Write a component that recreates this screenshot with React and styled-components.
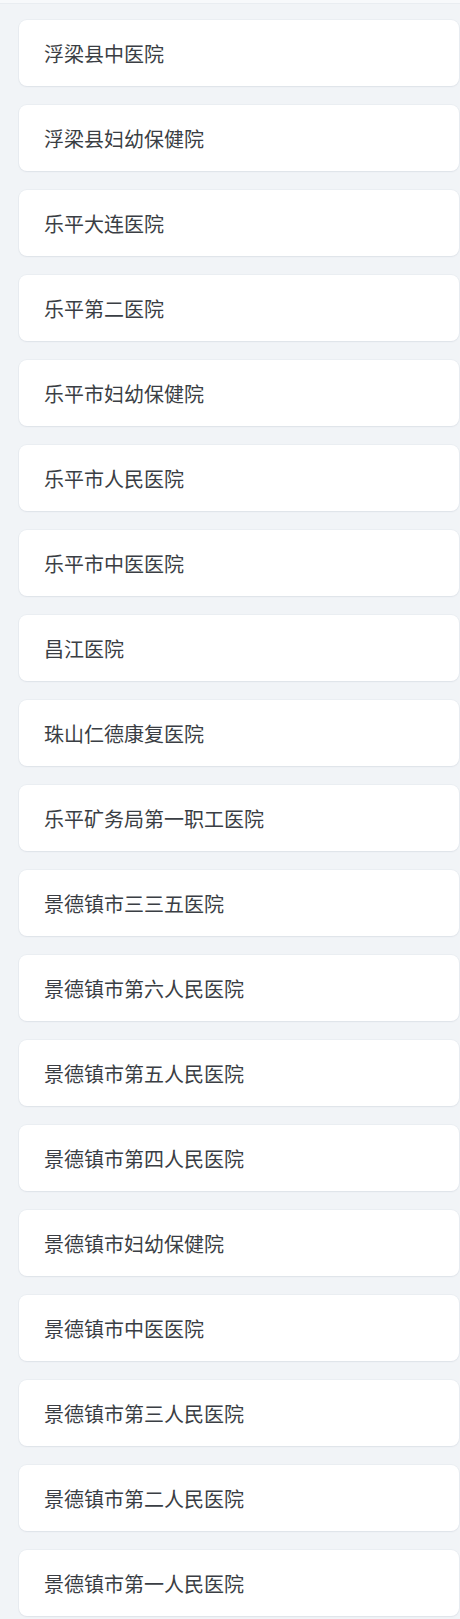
import React from "react";
import styled, { createGlobalStyle } from "styled-components";

const Global = createGlobalStyle`
  html, body { margin: 0; padding: 0; background: #f1f4f7; }
  body { font-family: "Microsoft YaHei", "Noto Sans CJK SC", "Noto Sans", sans-serif; }
`;

const TopStrip = styled.div`
  height: 3px;
  background: #f7f9fb;
  border-bottom: 1px solid #e9edf1;
`;

const List = styled.ul`
  list-style: none;
  margin: 0;
  padding: 16px 1px 3px 19px;
  display: flex;
  flex-direction: column;
  gap: 19px;
`;

const Card = styled.li`
  height: 66px;
  box-sizing: border-box;
  display: flex;
  align-items: center;
  padding-left: 25px;
  background: #ffffff;
  border-radius: 8px;
  box-shadow: 0 1px 2px rgba(30, 50, 80, 0.06), 0 0 0 1px rgba(30, 50, 80, 0.03);
  font-size: 20px;
  color: #3a3e44;
  font-weight: 400;
`;

const hospitals = [
  "浮梁县中医院",
  "浮梁县妇幼保健院",
  "乐平大连医院",
  "乐平第二医院",
  "乐平市妇幼保健院",
  "乐平市人民医院",
  "乐平市中医医院",
  "昌江医院",
  "珠山仁德康复医院",
  "乐平矿务局第一职工医院",
  "景德镇市三三五医院",
  "景德镇市第六人民医院",
  "景德镇市第五人民医院",
  "景德镇市第四人民医院",
  "景德镇市妇幼保健院",
  "景德镇市中医医院",
  "景德镇市第三人民医院",
  "景德镇市第二人民医院",
  "景德镇市第一人民医院",
];

export default function App() {
  return (
    <>
      <Global />
      <TopStrip />
      <List>
        {hospitals.map((h) => (
          <Card key={h}>{h}</Card>
        ))}
      </List>
    </>
  );
}
